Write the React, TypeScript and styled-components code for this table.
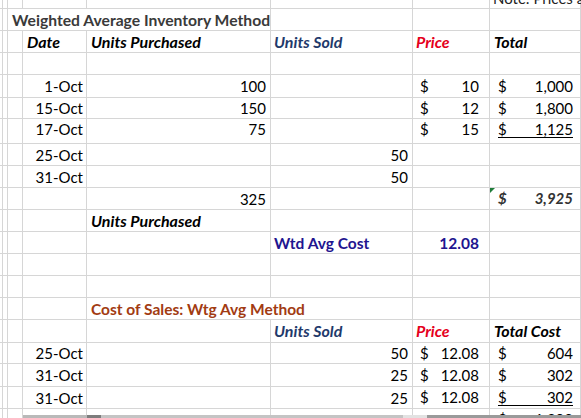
import React from "react";
import styled, { createGlobalStyle } from "styled-components";

const GRID = "#d6d6d6";
const COLS = "3px 5px 15px 64px 184px 142px 77px 1fr";

const Global = createGlobalStyle`
  html, body { margin: 0; padding: 0; background: #fff; }
  body { width: 581px; height: 418px; overflow: hidden; }
`;

const Sheet = styled.div`
  width: 581px;
  height: 418px;
  overflow: hidden;
  display: flex;
  flex-direction: column;
  font-family: Lato, "Open Sans", sans-serif;
  font-size: 15px;
  color: #000;
`;

const Body = styled.div`
  flex: none;
  height: 415px;
  overflow: hidden;
`;

const Row = styled.div<{ $h: number }>`
  display: grid;
  grid-template-columns: ${COLS};
  grid-template-rows: ${(p) => p.$h}px;
  height: ${(p) => p.$h}px;
`;

const Cell = styled.div<{
  $span?: number;
  $right?: boolean;
  $pl?: number;
  $pr?: number;
  $pb?: number;
  $end?: boolean;
}>`
  box-sizing: border-box;
  min-width: 0;
  min-height: 0;
  position: relative;
  grid-column: span ${(p) => p.$span ?? 1};
  border-right: 1px solid ${GRID};
  border-bottom: 1px solid ${GRID};
  display: flex;
  align-items: ${(p) => (p.$end ? "flex-end" : "center")};
  justify-content: ${(p) => (p.$right ? "flex-end" : "flex-start")};
  padding: 0 ${(p) => p.$pr ?? 0}px ${(p) => p.$pb ?? 0}px ${(p) => p.$pl ?? 0}px;
  white-space: nowrap;
  line-height: 16px;
`;

const Flag = styled.span`
  position: absolute;
  left: 0;
  top: 0;
  width: 0;
  height: 0;
  border-top: 5px solid #1f7d3a;
  border-right: 5px solid transparent;
`;

const Title = styled.span`
  font-weight: 700;
  font-size: 15.7px;
  color: #3a3a3a;
`;

const Head = styled.span<{ $c?: string }>`
  font-weight: 700;
  font-style: italic;
  font-size: 16px;
  color: ${(p) => p.$c ?? "#000"};
`;

const Strong = styled.span<{ $c: string }>`
  font-weight: 700;
  font-size: 15.5px;
  color: ${(p) => p.$c};
`;

const Note = styled.span`
  color: #222;
`;

const Acc = styled.span<{ $under?: boolean; $bold?: boolean; $c?: string }>`
  flex: 1;
  display: flex;
  justify-content: space-between;
  border-bottom: 1px solid ${(p) => (p.$under ? "#000" : "transparent")};
  font-weight: ${(p) => (p.$bold ? 700 : 400)};
  font-style: ${(p) => (p.$bold ? "italic" : "normal")};
  color: ${(p) => p.$c ?? "#000"};
  line-height: 16px;
`;

const Footer = styled.div`
  flex: none;
  height: 3px;
  display: grid;
  grid-template-columns: 3px 5px 15px 1fr;
`;

const FootCell = styled.div`
  border-right: 1px solid ${GRID};
`;

const Scroll = styled.div`
  background: linear-gradient(
    to right,
    #b9b9b9 0px,
    #b9b9b9 64px,
    #7d7d7d 64px,
    #7d7d7d 78px,
    #c4c4c4 78px,
    #c4c4c4 380px,
    #e2e2e2 380px,
    #e2e2e2 404px,
    #9a9a9a 404px
  );
`;

const BLUE = "#1f3a6b";
const RED = "#e5001c";
const PURPLE = "#21148f";
const RUST = "#a23b12";

const Lead = () => (
  <>
    <Cell />
    <Cell />
    <Cell />
  </>
);

const Date = ({ d }: { d: string }) => (
  <Cell $right $pr={3}>
    {d}
  </Cell>
);

const Num = ({ v }: { v?: string }) => (
  <Cell $right $pr={4}>
    {v}
  </Cell>
);

const Price = ({ v }: { v?: string }) => (
  <Cell $pl={7} $pr={10}>
    {v && (
      <Acc>
        <span>$</span>
        <span>{v}</span>
      </Acc>
    )}
  </Cell>
);

const Total = ({
  v,
  under,
  bold,
  flag,
}: {
  v?: string;
  under?: boolean;
  bold?: boolean;
  flag?: boolean;
}) => (
  <Cell $pl={8} $pr={7}>
    {flag && <Flag />}
    {v && (
      <Acc $under={under} $bold={bold} $c={bold ? "#333" : undefined}>
        <span>$</span>
        <span>{v}</span>
      </Acc>
    )}
  </Cell>
);

export default function App() {
  return (
    <Sheet>
      <Global />
      <Body>
        <Row $h={9}>
          <Lead />
          <Cell />
          <Cell />
          <Cell />
          <Cell />
          <Cell $end $pl={3} $pb={2}>
            <Note>Note: Prices are</Note>
          </Cell>
        </Row>
        <Row $h={22}>
          <Cell />
          <Cell />
          <Cell $span={3} $pl={4}>
            <Title>Weighted Average Inventory Method</Title>
          </Cell>
          <Cell />
          <Cell />
          <Cell />
        </Row>
        <Row $h={22}>
          <Lead />
          <Cell $pl={4}>
            <Head>Date</Head>
          </Cell>
          <Cell $pl={4}>
            <Head>Units Purchased</Head>
          </Cell>
          <Cell $pl={3}>
            <Head $c={BLUE}>Units Sold</Head>
          </Cell>
          <Cell $pl={3}>
            <Head $c={RED}>Price</Head>
          </Cell>
          <Cell $pl={4}>
            <Head>Total</Head>
          </Cell>
        </Row>
        <Row $h={22}>
          <Lead />
          <Cell />
          <Cell />
          <Cell />
          <Cell />
          <Cell />
        </Row>
        <Row $h={23}>
          <Lead />
          <Date d="1-Oct" />
          <Num v="100" />
          <Num />
          <Price v="10" />
          <Total v="1,000" />
        </Row>
        <Row $h={21}>
          <Lead />
          <Date d="15-Oct" />
          <Num v="150" />
          <Num />
          <Price v="12" />
          <Total v="1,800" />
        </Row>
        <Row $h={25}>
          <Lead />
          <Cell $right $pr={3} $pb={4}>
            17-Oct
          </Cell>
          <Cell $right $pr={4} $pb={4}>
            75
          </Cell>
          <Cell />
          <Cell $pl={7} $pr={10} $pb={4}>
            <Acc>
              <span>$</span>
              <span>15</span>
            </Acc>
          </Cell>
          <Cell $pl={8} $pr={7} $pb={4}>
            <Acc $under>
              <span>$</span>
              <span>1,125</span>
            </Acc>
          </Cell>
        </Row>
        <Row $h={22}>
          <Lead />
          <Date d="25-Oct" />
          <Num />
          <Num v="50" />
          <Price />
          <Total />
        </Row>
        <Row $h={22}>
          <Lead />
          <Date d="31-Oct" />
          <Num />
          <Num v="50" />
          <Price />
          <Total />
        </Row>
        <Row $h={22}>
          <Lead />
          <Cell />
          <Num v="325" />
          <Num />
          <Price />
          <Total v="3,925" bold flag />
        </Row>
        <Row $h={22}>
          <Lead />
          <Cell />
          <Cell $pl={4}>
            <Head>Units Purchased</Head>
          </Cell>
          <Cell />
          <Cell />
          <Cell />
        </Row>
        <Row $h={22}>
          <Lead />
          <Cell />
          <Cell />
          <Cell $pl={3}>
            <Strong $c={PURPLE}>Wtd Avg Cost</Strong>
          </Cell>
          <Cell $right $pr={10}>
            <Strong $c={PURPLE}>12.08</Strong>
          </Cell>
          <Cell />
        </Row>
        <Row $h={22}>
          <Lead />
          <Cell />
          <Cell />
          <Cell />
          <Cell />
          <Cell />
        </Row>
        <Row $h={22}>
          <Lead />
          <Cell />
          <Cell />
          <Cell />
          <Cell />
          <Cell />
        </Row>
        <Row $h={22}>
          <Lead />
          <Cell />
          <Cell $span={2} $pl={4}>
            <Strong $c={RUST}>Cost of Sales: Wtg Avg Method</Strong>
          </Cell>
          <Cell />
          <Cell />
        </Row>
        <Row $h={23}>
          <Lead />
          <Cell />
          <Cell />
          <Cell $pl={3}>
            <Head $c={BLUE}>Units Sold</Head>
          </Cell>
          <Cell $pl={3}>
            <Head $c={RED}>Price</Head>
          </Cell>
          <Cell $pl={4}>
            <Head>Total Cost</Head>
          </Cell>
        </Row>
        <Row $h={21}>
          <Lead />
          <Date d="25-Oct" />
          <Num />
          <Num v="50" />
          <Price v="12.08" />
          <Total v="604" />
        </Row>
        <Row $h={23}>
          <Lead />
          <Date d="31-Oct" />
          <Num />
          <Num v="25" />
          <Price v="12.08" />
          <Total v="302" />
        </Row>
        <Row $h={22}>
          <Lead />
          <Date d="31-Oct" />
          <Num />
          <Num v="25" />
          <Price v="12.08" />
          <Total v="302" under />
        </Row>
        <Row $h={22}>
          <Lead />
          <Cell />
          <Cell />
          <Cell />
          <Cell />
          <Total v="1,208" />
        </Row>
      </Body>
      <Footer>
        <FootCell />
        <FootCell />
        <FootCell />
        <Scroll />
      </Footer>
    </Sheet>
  );
}
